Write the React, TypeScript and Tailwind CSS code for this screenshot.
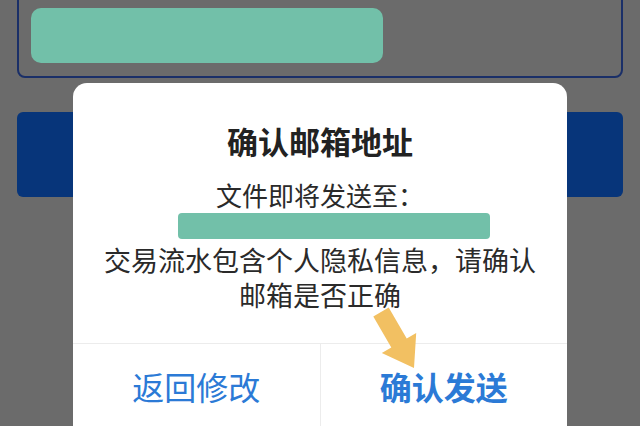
import React from 'react'

const FONT = { fontFamily: '"Noto Sans CJK SC", "Noto Sans", sans-serif' }

function Arrow() {
  return (
    <svg
      className="absolute left-[360px] top-[300px]"
      width="70"
      height="80"
      viewBox="360 300 70 80"
    >
      <polygon
        points="388.7,307.4 373.3,316.6 391.3,347.6 381.8,353.1 414,368 416.2,332.9 406.7,338.4"
        fill="#f2c062"
      />
    </svg>
  )
}

export default function App() {
  return (
    <div className="relative w-[640px] h-[426px] overflow-hidden bg-[#6b6b6b]" style={FONT}>
      <div className="px-[17px]">
        <div className="mt-[-10px] h-[88px] rounded-lg border-2 border-[#1a2f68] pl-[12px] pt-[16px]">
          <div className="w-[352px] h-[55px] rounded-[10px] bg-[#72c0a9]" />
        </div>
        <div className="mt-[34px] h-[85px] rounded-md bg-[#07357a]" />
      </div>

      <div className="absolute left-[73px] top-[83px] w-[494px] h-[360px] rounded-[14px] bg-white flex flex-col">
        <div className="pt-[38px] text-center text-[31px] leading-[40px] font-bold text-[#222]">
          确认邮箱地址
        </div>
        <div className="mt-[16px] text-center text-[26px] leading-[36px] text-[#2a2a2a]">
          文件即将发送至：
        </div>
        <div className="ml-[105px] w-[312px] h-[26px] rounded-[4px] bg-[#72c0a9]" />
        <div className="mt-[3px] px-[20px] text-center text-[27px] leading-[35px] text-[#2a2a2a]">
          <p>交易流水包含个人隐私信息，请确认</p>
          <p>邮箱是否正确</p>
        </div>
        <div className="mt-[31px] flex flex-1 border-t border-[#ececec]">
          <div className="flex-1 flex items-start justify-center pt-[21px] text-[32px] leading-[42px] text-[#2b7ad6]">
            返回修改
          </div>
          <div className="flex-1 flex items-start justify-center pt-[21px] border-l border-[#ececec] text-[32px] leading-[42px] font-bold text-[#2b7ad6]">
            确认发送
          </div>
        </div>
      </div>

      <Arrow />
    </div>
  )
}
